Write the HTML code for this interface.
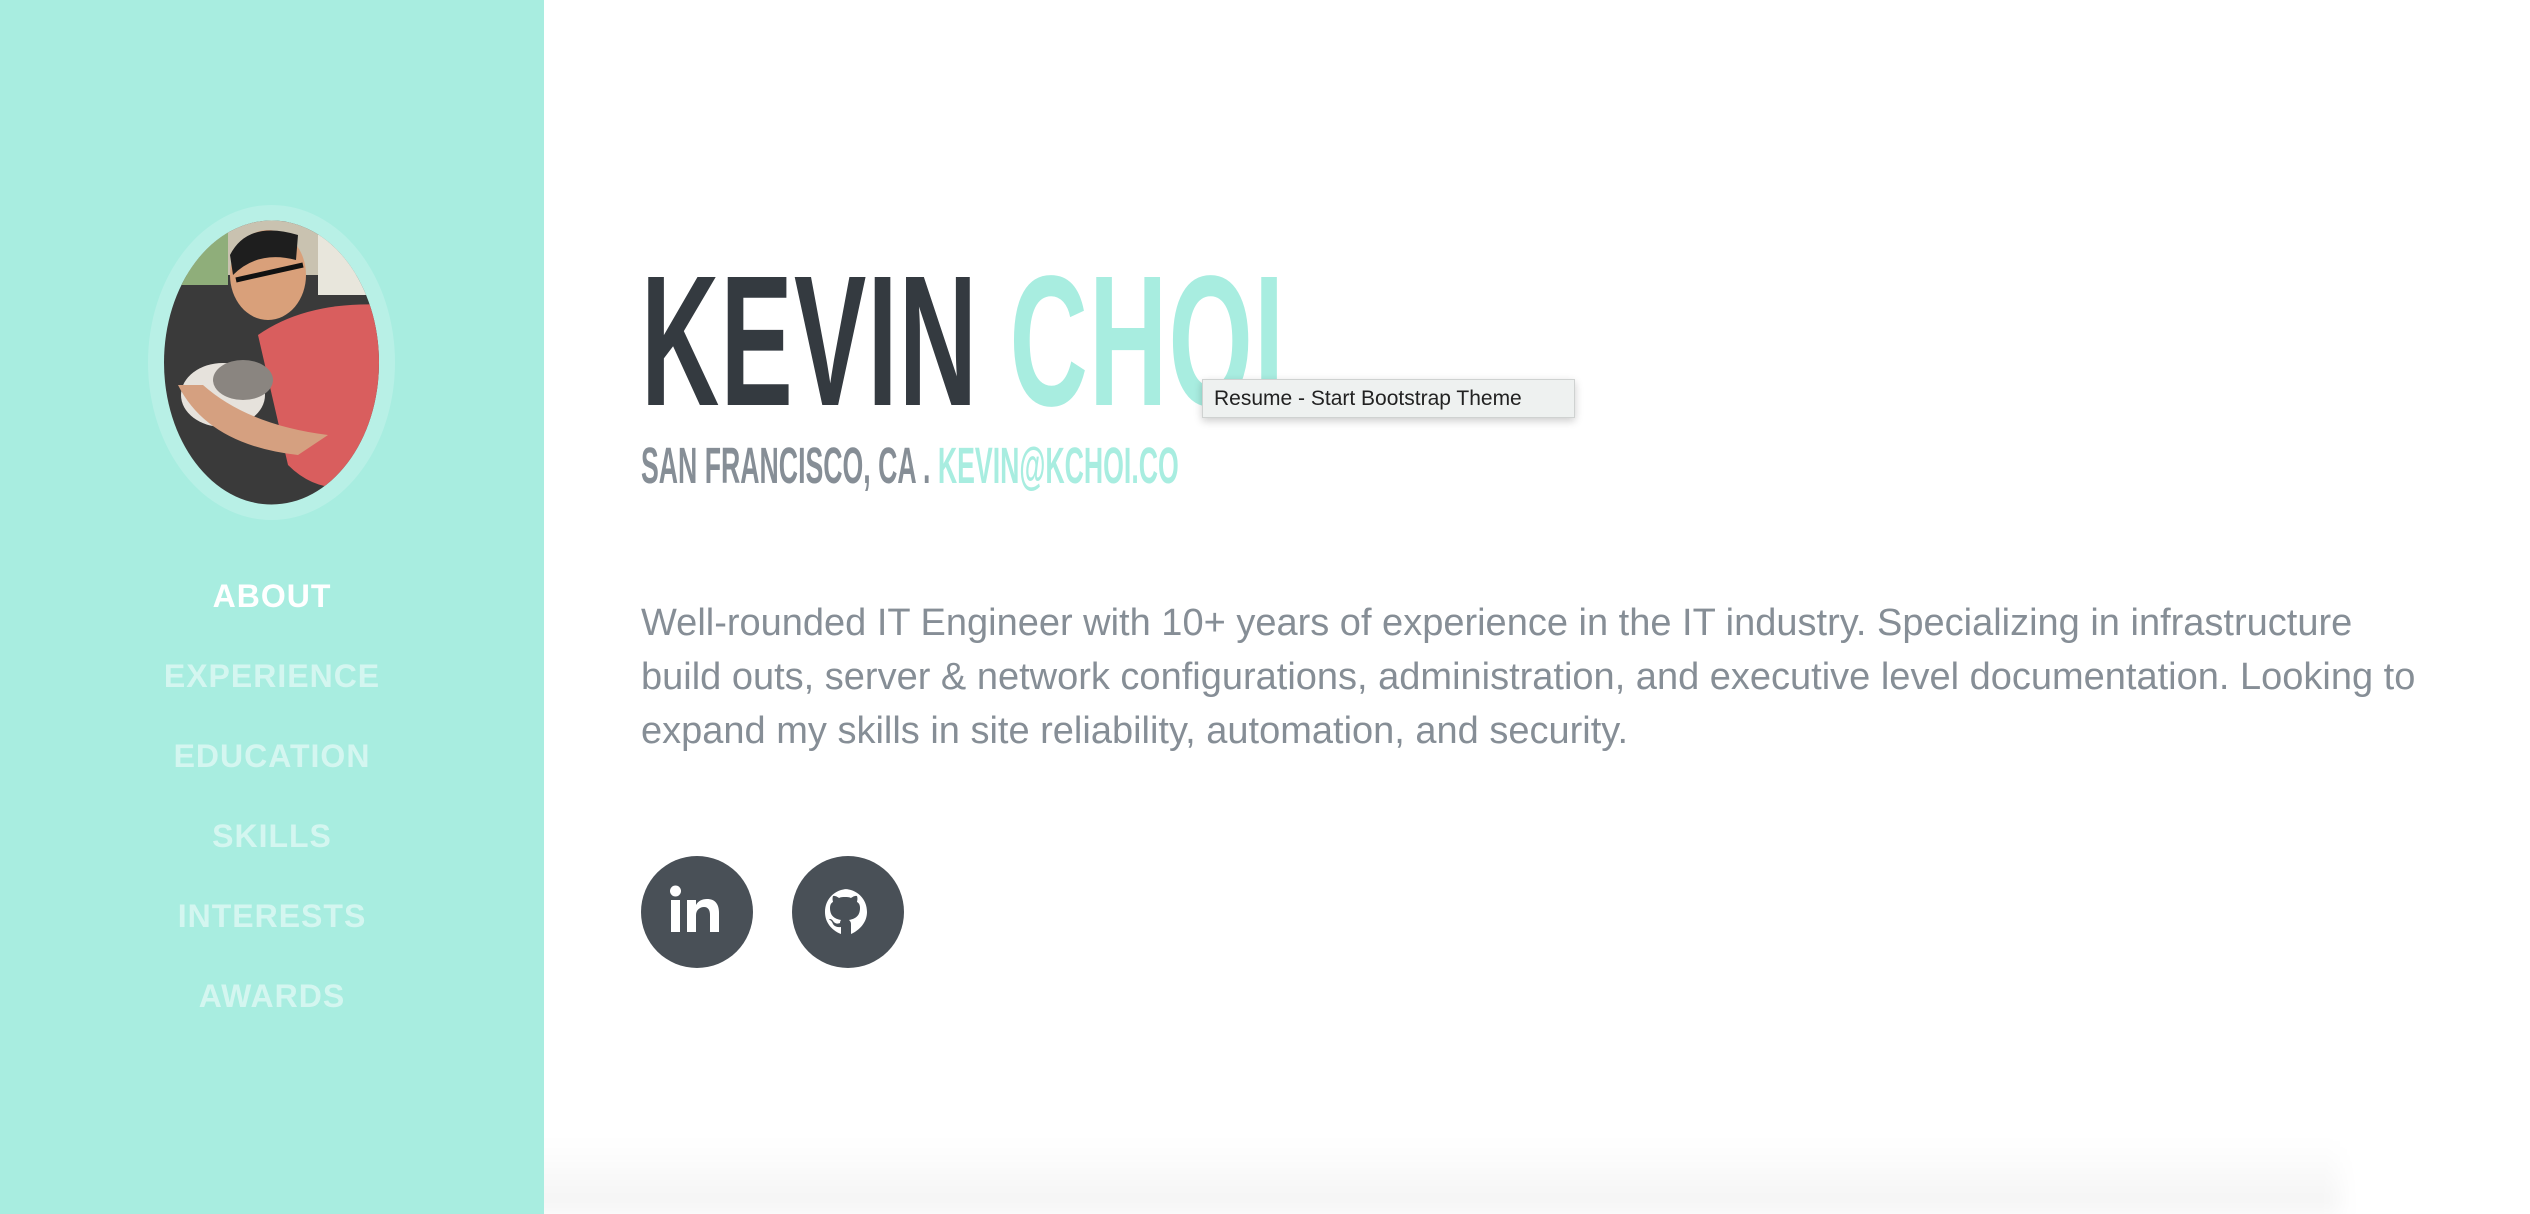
<!DOCTYPE html>
<html><head><meta charset="utf-8"><style>
*{margin:0;padding:0;box-sizing:border-box}
html,body{width:2530px;height:1214px;overflow:hidden;background:#fff;font-family:"Liberation Sans",sans-serif}
#side{position:absolute;left:0;top:0;width:544px;height:1214px;background:#a8ede0}
#photo{position:absolute;left:148px;top:205px;width:247px;height:315px}
.nav{position:absolute;left:0;width:544px;text-align:center;font-weight:bold;font-size:32px;letter-spacing:1px;color:rgba(255,255,255,.5)}
.nav.a{color:#fff}
#name{position:absolute;left:641px;top:249px;font-size:186px;font-weight:bold;color:#343a40;line-height:1;white-space:nowrap;transform:scaleX(.583);transform-origin:0 0;letter-spacing:2px}
#name span{color:#a8ede0}
#sub{position:absolute;left:641px;top:440px;font-size:51px;font-weight:bold;color:#868e96;white-space:nowrap;transform:scaleX(.523);transform-origin:0 0;line-height:1}
#sub span{color:#a8ede0}
#p{position:absolute;left:641px;top:596px;font-size:38px;line-height:54px;color:#868e96;white-space:nowrap}
.c{position:absolute;top:856px;width:112px;height:112px;border-radius:50%;background:#495057}
#tip{position:absolute;left:1202px;top:379px;width:373px;height:39px;background:#eef1f0;border:1px solid #cfd2d1;box-shadow:0 3px 8px rgba(0,0,0,.2);font-size:21px;line-height:37px;padding-left:11px;color:#222}
#shadow{position:absolute;left:220px;top:1140px;width:2120px;height:74px;background:linear-gradient(#fff0,#0000000c);filter:blur(10px)}
</style></head><body>
<div id="shadow"></div>
<div id="side">
<svg id="photo" viewBox="0 0 247 315">
<defs><clipPath id="cl"><ellipse cx="123.5" cy="157.5" rx="107.5" ry="142"/></clipPath></defs>
<ellipse cx="123.5" cy="157.5" rx="123.5" ry="157.5" fill="#b8f0e6"/>
<g clip-path="url(#cl)">
<rect width="247" height="315" fill="#3a3a3a"/>
<rect x="0" y="0" width="247" height="70" fill="#c9c2b0"/>
<rect x="10" y="20" width="70" height="60" fill="#8fae7a"/>
<rect x="170" y="30" width="60" height="60" fill="#e8e6dc"/>
<path d="M110 130 Q160 95 240 100 L240 270 Q180 300 140 260 Z" fill="#d95e5e"/>
<ellipse cx="120" cy="70" rx="38" ry="45" fill="#d9a07a"/>
<path d="M82 50 Q100 15 150 30 L148 55 Q110 45 85 70Z" fill="#1e1e1e"/>
<path d="M88 75 L155 60" stroke="#111" stroke-width="5"/>
<ellipse cx="75" cy="190" rx="42" ry="32" fill="#e6e2dc"/>
<ellipse cx="95" cy="175" rx="30" ry="20" fill="#8a8580"/>
<path d="M30 180 Q60 240 150 250 L180 230 Q100 220 55 180Z" fill="#d5a080"/>
</g>
</svg>
<div class="nav a" style="top:578px">ABOUT</div>
<div class="nav" style="top:658px">EXPERIENCE</div>
<div class="nav" style="top:738px">EDUCATION</div>
<div class="nav" style="top:818px">SKILLS</div>
<div class="nav" style="top:898px">INTERESTS</div>
<div class="nav" style="top:978px">AWARDS</div>
</div>
<div id="name">KEVIN <span>CHOI</span></div>
<div id="sub">SAN FRANCISCO, CA . <span>KEVIN@KCHOI.CO</span></div>
<div id="p">Well-rounded IT Engineer with 10+ years of experience in the IT industry. Specializing in infrastructure<br>build outs, server &amp; network configurations, administration, and executive level documentation. Looking to<br>expand my skills in site reliability, automation, and security.</div>
<div class="c" style="left:641px"><svg width="112" height="112" viewBox="0 0 112 112"><rect x="30" y="44" width="9" height="32" fill="#fff"/><circle cx="34.5" cy="35" r="5.5" fill="#fff"/><path d="M46 44h9v5c2-4 6-6 11-6 8 0 12 5 12 14v19h-9V59c0-5-2-8-6-8s-8 3-8 8v17h-9Z" fill="#fff"/></svg></div>
<div class="c" style="left:792px"><svg width="112" height="112" viewBox="0 0 112 112"><path d="M56 33c-13 0-23 10-23 23 0 10 6 18 16 22v-7c-6 1-8-3-8-3-1-3-3-4-3-4-2-1 0-1 0-1 2 0 3 2 3 2 2 3 5 3 7 2 0-2 1-3 1-3-5-1-11-3-11-12 0-3 1-5 3-6 0-1-1-3 0-6 0 0 2-1 6 2 2-1 4-1 6-1s4 0 6 1c4-3 6-2 6-2 1 3 0 5 0 6 2 1 3 3 3 6 0 9-6 11-11 12 1 1 2 2 2 4v10c9-4 16-12 16-22 0-13-10-23-23-23Z" fill="#fff"/></svg></div>
<div id="tip">Resume - Start Bootstrap Theme</div>
</body></html>
